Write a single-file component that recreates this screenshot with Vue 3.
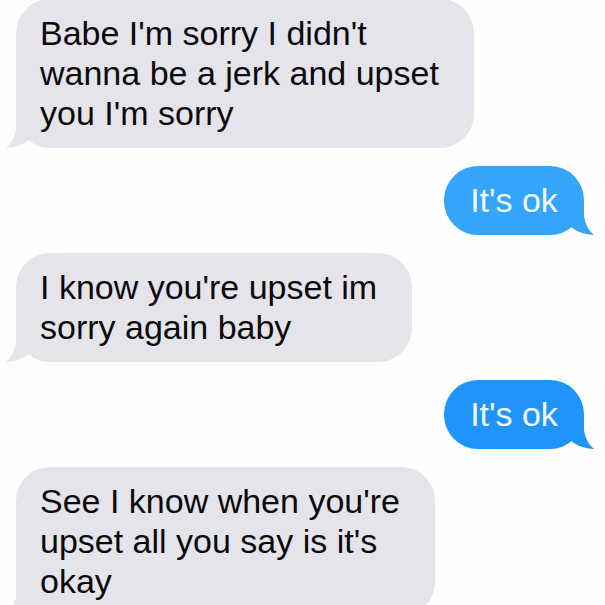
<script setup>
const messages = [
  { id: 1, from: 'them', text: "Babe I'm sorry I didn't\nwanna be a jerk and upset\nyou I'm sorry" },
  { id: 2, from: 'me', tone: 'light', text: "It's ok" },
  { id: 3, from: 'them', text: "I know you're upset im\nsorry again baby" },
  { id: 4, from: 'me', tone: 'deep', text: "It's ok" },
  { id: 5, from: 'them', text: "See I know when you're\nupset all you say is it's\nokay" },
]
</script>

<template>
  <main class="thread">
    <article
      v-for="message in messages"
      :key="message.id"
      class="bubble"
      :class="[message.from, message.tone]"
    >
      <p class="text">{{ message.text }}</p>
      <svg class="tail" viewBox="0 0 32 36" aria-hidden="true">
        <path d="M10 0V17C9 24 6 31 0 36C9 35.500 17 33 22 28.500L32 20V0Z" />
      </svg>
    </article>
  </main>
</template>

<style>
body {
  background: #fefefe;
}
</style>

<style scoped>
.thread {
  box-sizing: border-box;
  display: flex;
  flex-direction: column;
  gap: 18px;
  height: 100vh;
  padding: 0 21px 0 16px;
  overflow: hidden;
  font-family: "Liberation Sans", Arial, sans-serif;
  font-size: 34px;
  line-height: 40px;
}

/* The thread is scrolled slightly past the top of the first bubble. */
.thread::before {
  content: "";
  flex: none;
  margin-top: -19px;
}

.bubble {
  position: relative;
  flex: none;
  box-sizing: border-box;
  min-width: 140px;
  padding: 14px 35px 15px 24px;
  border-radius: 34px;
}

.them {
  align-self: flex-start;
  background: #e5e4ea;
  color: #0b0b0d;
}

.me {
  align-self: flex-end;
  padding-right: 24px;
  color: #effcff;
}

.light {
  background: #35a5fb;
}

.deep {
  background: #2094fb;
}

.text {
  margin: 0;
  white-space: pre-line;
}

.tail {
  position: absolute;
  bottom: 0;
  left: -10px;
  width: 32px;
  height: 36px;
  fill: #e5e4ea;
}

.me .tail {
  right: -10px;
  left: auto;
  transform: scaleX(-1);
}

.me .text {
  text-align: center;
}

.light .tail {
  fill: #35a5fb;
}

.deep .tail {
  fill: #2094fb;
}
</style>
